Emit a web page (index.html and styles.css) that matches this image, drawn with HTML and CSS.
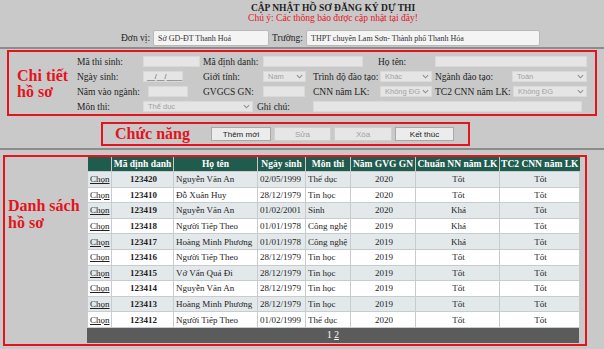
FILE: index.html
```html
<!DOCTYPE html>
<html>
<head>
    <meta charset="utf-8">
    <title>Cập nhật hồ sơ đăng ký dự thi</title>
    <link rel="stylesheet" href="styles.css">
</head>
<body>
    <div class="header">
        <div class="page-title">CẬP NHẬT HỒ SƠ ĐĂNG KÝ DỰ THI</div>
        <div class="notice">Chú ý: Các thông báo được cập nhật tại đây!</div>
        <div class="unit-row">
            <span class="unit-label">Đơn vị:</span>
            <div class="unit-box unit-short">Sở GD-ĐT Thanh Hoá</div>
            <span class="unit-label">Trường:</span>
            <div class="unit-box unit-long">THPT chuyên Lam Sơn- Thành phố Thanh Hóa</div>
        </div>
    </div>

    <div class="panel">
        <div class="red-box detail-box">
            <div class="box-title detail-title">Chi tiết<br>hồ sơ</div>
            <div class="detail-form">
                <span class="lbl">Mã thi sinh:</span>
                <div class="field fld-57"></div>
                <span class="lbl">Mã định danh:</span>
                <div class="field fld-100 span2"></div>
                <span class="lbl nudge-2">Họ tên:</span>
                <div class="field fld-152 span2"></div>

                <span class="lbl">Ngày sinh:</span>
                <div class="field fld-40 mask">__/__/____</div>
                <span class="lbl">Giới tính:</span>
                <div class="select fld-43"><span>Nam</span><svg class="chev" viewBox="0 0 8 5"><path d="M1 1l3 3 3-3"/></svg></div>
                <span class="lbl">Trình độ đào tạo:</span>
                <div class="select fld-52"><span>Khác</span><svg class="chev" viewBox="0 0 8 5"><path d="M1 1l3 3 3-3"/></svg></div>
                <span class="lbl">Ngành đào tạo:</span>
                <div class="select fld-75"><span>Toán</span><svg class="chev" viewBox="0 0 8 5"><path d="M1 1l3 3 3-3"/></svg></div>

                <span class="lbl">Năm vào ngành:</span>
                <div class="field fld-40 push-5"></div>
                <span class="lbl">GVGCS GN:</span>
                <div class="field fld-42"></div>
                <span class="lbl">CNN năm LK:</span>
                <div class="select fld-52"><span>Không ĐG</span><svg class="chev" viewBox="0 0 8 5"><path d="M1 1l3 3 3-3"/></svg></div>
                <span class="lbl">TC2 CNN năm LK:</span>
                <div class="select fld-74 push-1"><span>Không ĐG</span><svg class="chev" viewBox="0 0 8 5"><path d="M1 1l3 3 3-3"/></svg></div>

                <span class="lbl">Môn thi:</span>
                <div class="select fld-110 span2"><span>Thể dục</span><svg class="chev" viewBox="0 0 8 5"><path d="M1 1l3 3 3-3"/></svg></div>
                <span class="lbl nudge-6">Ghi chú:</span>
                <div class="field fld-269 span4"></div>
            </div>
        </div>

        <div class="red-box func-box">
            <div class="box-title func-title">Chức năng</div>
            <div class="buttons">
                <button class="btn btn-add">Thêm mới</button>
                <button class="btn btn-edit" disabled>Sửa</button>
                <button class="btn btn-delete" disabled>Xóa</button>
                <button class="btn btn-exit">Kết thúc</button>
            </div>
        </div>
    </div>

    <div class="list-panel">
        <div class="red-box list-box">
            <div class="box-title list-title">Danh sách<br>hồ sơ</div>
            <div class="table-wrap">
                <table class="grid">
                    <colgroup>
                        <col class="col-pick">
                        <col class="col-code">
                        <col class="col-name">
                        <col class="col-dob">
                        <col class="col-subject">
                        <col class="col-year">
                        <col class="col-nn">
                        <col class="col-cnn">
                    </colgroup>
                    <thead>
                        <tr>
                            <th></th>
                            <th>Mã định danh</th>
                            <th>Họ tên</th>
                            <th>Ngày sinh</th>
                            <th>Môn thi</th>
                            <th>Năm GVG GN</th>
                            <th>Chuẩn NN năm LK</th>
                            <th>TC2 CNN năm LK</th>
                        </tr>
                    </thead>
                    <tbody>
                        <tr><td><a href="#">Chọn</a></td><td class="code">123420</td><td>Nguyễn Văn An</td><td>02/05/1999</td><td>Thể dục</td><td class="mid">2020</td><td class="mid">Tốt</td><td class="mid">Tốt</td></tr>
                        <tr><td><a href="#">Chọn</a></td><td class="code">123410</td><td>Đỗ Xuân Huy</td><td>28/12/1979</td><td>Tin học</td><td class="mid">2020</td><td class="mid">Tốt</td><td class="mid">Tốt</td></tr>
                        <tr><td><a href="#">Chọn</a></td><td class="code">123419</td><td>Nguyễn Văn An</td><td>01/02/2001</td><td>Sinh</td><td class="mid">2020</td><td class="mid">Khá</td><td class="mid">Tốt</td></tr>
                        <tr><td><a href="#">Chọn</a></td><td class="code">123418</td><td>Người Tiếp Theo</td><td>01/01/1978</td><td>Công nghệ</td><td class="mid">2019</td><td class="mid">Khá</td><td class="mid">Tốt</td></tr>
                        <tr><td><a href="#">Chọn</a></td><td class="code">123417</td><td>Hoàng Minh Phương</td><td>01/01/1978</td><td>Công nghệ</td><td class="mid">2019</td><td class="mid">Khá</td><td class="mid">Tốt</td></tr>
                        <tr><td><a href="#">Chọn</a></td><td class="code">123416</td><td>Người Tiếp Theo</td><td>28/12/1979</td><td>Tin học</td><td class="mid">2019</td><td class="mid">Tốt</td><td class="mid">Tốt</td></tr>
                        <tr><td><a href="#">Chọn</a></td><td class="code">123415</td><td>Vớ Vẩn Quá Đi</td><td>28/12/1979</td><td>Tin học</td><td class="mid">2019</td><td class="mid">Tốt</td><td class="mid">Tốt</td></tr>
                        <tr><td><a href="#">Chọn</a></td><td class="code">123414</td><td>Nguyễn Văn An</td><td>28/12/1979</td><td>Tin học</td><td class="mid">2019</td><td class="mid">Tốt</td><td class="mid">Tốt</td></tr>
                        <tr><td><a href="#">Chọn</a></td><td class="code">123413</td><td>Hoàng Minh Phương</td><td>28/12/1979</td><td>Tin học</td><td class="mid">2019</td><td class="mid">Tốt</td><td class="mid">Tốt</td></tr>
                        <tr><td><a href="#">Chọn</a></td><td class="code">123412</td><td>Người Tiếp Theo</td><td>01/02/1999</td><td>Thể dục</td><td class="mid">2020</td><td class="mid">Tốt</td><td class="mid">Tốt</td></tr>
                    </tbody>
                </table>
                <div class="pager"><span>1</span> <a href="#">2</a></div>
            </div>
        </div>
    </div>
</body>
</html>
```

FILE: styles.css
```css
body {
    margin: 0;
    background-color: #c9c9c9;
    font-family: 'Liberation Serif', 'Times New Roman', serif;
    font-size: 9.5px;
    color: #1e1e1e;
}
.header {
    padding: 3px 0 1px;
}
.page-title, .notice {
    text-align: center;
    line-height: 10px;
    padding-left: 62px;
}
.page-title {
    font-weight: bold;
}
.notice {
    color: #e3141d;
}
.unit-row {
    display: flex;
    align-items: center;
    gap: 3px;
    margin-top: 7px;
    padding-left: 121px;
}
.unit-box {
    height: 16px;
    line-height: 15px;
    box-sizing: border-box;
    padding: 0 4px;
    background-color: #f4f4f4;
    border: 1px solid #b9b9b9;
    border-radius: 2px;
    font-size: 8px;
    color: #333;
}
.unit-short {
    width: 116px;
}
.unit-long {
    width: 234px;
}

/* panels with the dark rule on top */
.panel, .list-panel {
    border-top: 2px solid #8c8c8c;
}
.panel {
    padding: 1px 7px 2px;
}
.list-panel {
    padding: 5px 17px 3px 3px;
}
.red-box {
    border: 2px solid #e3141d;
}
.box-title {
    color: #e3141d;
    font-weight: bold;
    font-size: 16px;
}

/* detail form */
.detail-box {
    display: flex;
    padding-top: 2px;
}
.detail-title {
    width: 68px;
    box-sizing: border-box;
    padding-left: 8px;
    line-height: 16px;
    align-self: center;
}
.detail-form {
    display: grid;
    grid-template-columns: 66px 60px 60px 50px 67px 55px 77px 75px;
    grid-auto-rows: 15px;
    align-items: center;
}
.lbl {
    white-space: nowrap;
}
.field, .select {
    height: 11px;
    box-sizing: border-box;
    background-color: #e5e5e5;
    border: 1px solid #d9d9d9;
    justify-self: start;
}
.mask {
    font-family: 'Liberation Sans', Arial, sans-serif;
    font-size: 7px;
    line-height: 9px;
    padding-left: 3px;
    color: #555;
}
.select {
    display: flex;
    align-items: center;
    justify-content: space-between;
    padding: 0 2px 0 4px;
    font-family: 'Liberation Sans', Arial, sans-serif;
    font-size: 7.5px;
    color: #a2a2a2;
    white-space: nowrap;
    overflow: hidden;
}
.chev {
    width: 7px;
    height: 5px;
    flex-shrink: 0;
}
.chev path {
    fill: none;
    stroke: #8e8e8e;
    stroke-width: 1.2;
}
.span2 { grid-column: span 2; }
.span4 { grid-column: span 4; }
.nudge-2 { margin-left: -2px; }
.nudge-6 { margin-left: -6px; }
.push-5 { margin-left: 5px; }
.push-1 { margin-left: 1px; }
.fld-40 { width: 40px; }
.fld-42 { width: 42px; }
.fld-43 { width: 43px; }
.fld-52 { width: 52px; }
.fld-57 { width: 57px; }
.fld-74 { width: 74px; }
.fld-75 { width: 75px; }
.fld-100 { width: 100px; }
.fld-110 { width: 110px; }
.fld-152 { width: 152px; }
.fld-269 { width: 269px; }

/* function bar */
.func-box {
    display: flex;
    align-items: center;
    width: 369px;
    height: 24px;
    box-sizing: border-box;
    margin: 6px 0 0 94px;
    padding-left: 12px;
}
.func-title {
    line-height: 20px;
    width: 96px;
}
.buttons {
    display: flex;
    gap: 3px;
}
.btn {
    height: 14px;
    padding: 0;
    background-color: #ececec;
    border: 1px solid #a9a9a9;
    font-family: 'Liberation Sans', Arial, sans-serif;
    font-size: 8px;
    color: #222;
}
.btn:disabled {
    color: #a0a0a0;
    border-color: #cfcfcf;
    background-color: #e6e6e6;
}
.btn-add { width: 60px; }
.btn-edit { width: 57px; }
.btn-delete { width: 58px; }
.btn-exit { width: 59px; }

/* list */
.list-box {
    display: flex;
    padding: 0 6px 1px 0;
}
.list-title {
    width: 82px;
    box-sizing: border-box;
    padding: 40px 0 0 3px;
    line-height: 17px;
}
.table-wrap {
    width: 492px;
}
.grid {
    width: 492px;
    border-collapse: collapse;
    table-layout: fixed;
    font-size: 9px;
}
.col-pick { width: 24px; }
.col-code { width: 62px; }
.col-name { width: 84px; }
.col-dob { width: 48px; }
.col-subject { width: 45px; }
.col-year { width: 65px; }
.col-nn { width: 84px; }
.col-cnn { width: 80px; }
.grid th {
    height: 14px;
    padding: 0;
    background-color: #1f5c4e;
    color: #fff;
    font-weight: bold;
    font-size: 9.5px;
    border-left: 1px solid #c9c9c9;
    white-space: nowrap;
}
.grid th:first-child {
    border-left: none;
}
.grid td {
    height: 14.6px;
    padding: 0 0 0 2px;
    border: 1px solid #c7cdcf;
    white-space: nowrap;
    overflow: hidden;
}
.grid tbody tr:nth-child(odd) {
    background-color: #e3e9eb;
}
.grid tbody tr:nth-child(even) {
    background-color: #fff;
}
.grid td a {
    color: #222;
}
.grid .code {
    text-align: center;
    font-weight: bold;
}
.grid .mid {
    text-align: center;
}
.pager {
    height: 15px;
    line-height: 15px;
    background-color: #5b5b5b;
    color: #fff;
    text-align: center;
}
.pager a {
    color: #fff;
}
```
